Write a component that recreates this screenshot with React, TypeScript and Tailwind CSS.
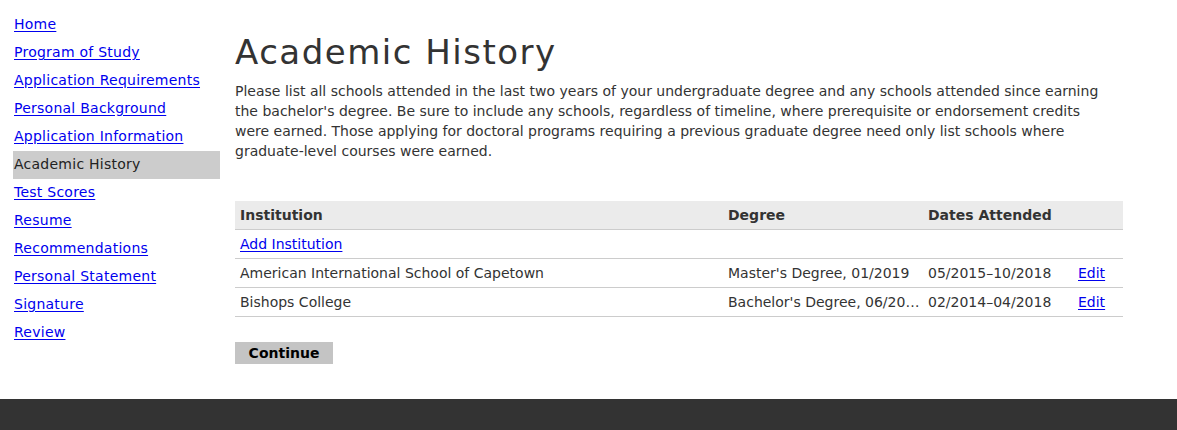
import React from "react";

const navItems = [
  "Home",
  "Program of Study",
  "Application Requirements",
  "Personal Background",
  "Application Information",
  "Academic History",
  "Test Scores",
  "Resume",
  "Recommendations",
  "Personal Statement",
  "Signature",
  "Review",
];

const schools = [
  { name: "American International School of Capetown", degree: "Master's Degree, 01/2019", dates: "05/2015–10/2018" },
  { name: "Bishops College", degree: "Bachelor's Degree, 06/2018", dates: "02/2014–04/2018" },
];

const cols = "grid grid-cols-[488px_200px_150px_50px]";

export default function App() {
  return (
    <div className="min-h-screen bg-white font-['DejaVu_Sans',sans-serif] text-[14px] text-[#333] flex flex-col">
      <div className="flex h-[399px]">
        {/* Sidebar nav */}
        <nav className="w-[207px] ml-[13px] pt-[11px] shrink-0">
          <ul>
            {navItems.map((item) => {
              const active = item === "Academic History";
              return (
                <li key={item} className={`h-[28px] leading-[26px] pl-[1px] tracking-[0.25px] ${active ? "bg-[#cccccc] text-[#222]" : ""}`}>
                  {active ? (
                    <span>{item}</span>
                  ) : (
                    <a href="#" className="text-[#0000ee] underline underline-offset-2">
                      {item}
                    </a>
                  )}
                </li>
              );
            })}
          </ul>
        </nav>

        {/* Main content */}
        <main className="ml-[15px] w-[888px] pt-[32px]">
          <h1 className="text-[34px] leading-[40px] tracking-[1.5px] text-[#333]">Academic History</h1>
          <p className="mt-[9px] leading-[20px] whitespace-nowrap">
            Please list all schools attended in the last two years of your undergraduate degree and any schools attended since earning
            <br />
            the bachelor's degree. Be sure to include any schools, regardless of timeline, where prerequisite or endorsement credits
            <br />
            were earned. Those applying for doctoral programs requiring a previous graduate degree need only list schools where
            <br />
            graduate-level courses were earned.
          </p>

          <div className="mt-[40px]">
            <div className={`${cols} h-[29px] bg-[#ebebeb] border-b border-[#cccccc] font-bold items-center text-[#333]`}>
              <div className="px-[5px]">Institution</div>
              <div className="px-[5px]">Degree</div>
              <div className="px-[5px]">Dates Attended</div>
              <div />
            </div>
            <div className={`${cols} h-[29px] border-b border-[#cccccc] items-center`}>
              <div className="px-[5px]">
                <a href="#" className="text-[#0000ee] underline underline-offset-2">
                  Add Institution
                </a>
              </div>
            </div>
            {schools.map((s) => (
              <div key={s.name} className={`${cols} h-[29px] border-b border-[#cccccc] items-center`}>
                <div className="px-[5px] truncate">{s.name}</div>
                <div className="pl-[5px] pr-0 truncate">{s.degree}</div>
                <div className="px-[5px] truncate">{s.dates}</div>
                <div className="px-[5px]">
                  <a href="#" className="text-[#0000ee] underline underline-offset-2">
                    Edit
                  </a>
                </div>
              </div>
            ))}
          </div>

          <button className="mt-[25px] w-[98px] h-[22px] bg-[#c4c4c4] font-bold text-black text-[14px] leading-[22px]">
            Continue
          </button>
        </main>
      </div>

      <footer className="flex-1 min-h-[31px] bg-[#333333]" />
    </div>
  );
}
